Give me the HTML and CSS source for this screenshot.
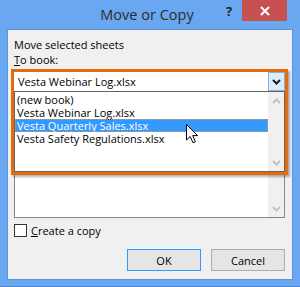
FILE: index.html
```html
<!DOCTYPE html>
<html lang="en">
<head>
  <meta charset="UTF-8" />
  <title>Move or Copy</title>
  <link rel="stylesheet" href="styles.css">
</head>
<body>
  <div class="window">
    <div class="titlebar">
      <div class="title">Move or Copy</div>
      <div class="help">?</div>
      <div class="close">
        <svg width="10" height="10" viewBox="0 0 10 10">
          <path d="M1 1 L9 9 M9 1 L1 9" stroke="#fff" stroke-width="2" />
        </svg>
      </div>
    </div>

    <div class="client">
      <p class="label">Move selected sheets</p>
      <p class="label"><u>T</u>o book:</p>

      <div class="book-select">
        <div class="combo">
          <span class="combo-text">Vesta Webinar Log.xlsx</span>
          <span class="combo-btn">
            <svg width="9" height="6" viewBox="0 0 9 6">
              <path d="M1 1 L4.5 4.5 L8 1" fill="none" stroke="#1e1e1e" stroke-width="2" />
            </svg>
          </span>
        </div>

        <div class="dropdown">
          <ul class="options">
            <li>(new book)</li>
            <li>Vesta Webinar Log.xlsx</li>
            <li class="selected">Vesta Quarterly Sales.xlsx</li>
            <li>Vesta Safety Regulations.xlsx</li>
          </ul>
          <div class="scrollbar">
            <svg width="9" height="6" viewBox="0 0 9 6">
              <path d="M1 5 L4.5 1.5 L8 5" fill="none" stroke="#c2c2c2" stroke-width="2" />
            </svg>
            <svg width="9" height="6" viewBox="0 0 9 6">
              <path d="M1 1 L4.5 4.5 L8 1" fill="none" stroke="#c2c2c2" stroke-width="2" />
            </svg>
          </div>
        </div>

        <svg class="cursor" width="13" height="20" viewBox="0 0 13 20">
          <path d="M0.5 0.5 L0.5 16 L4.2 12.5 L7 18.8 L9.4 17.8 L6.7 11.6 L11.6 11.6 Z" fill="#fff" stroke="#000" stroke-width="1" stroke-linejoin="miter" />
        </svg>
      </div>

      <div class="sheet-list">
        <div class="list-area"></div>
        <div class="scrollbar">
          <svg width="9" height="6" viewBox="0 0 9 6">
            <path d="M1 1 L4.5 4.5 L8 1" fill="none" stroke="#c2c2c2" stroke-width="2" />
          </svg>
        </div>
      </div>

      <div class="check">
        <span class="box"></span>
        <span><u>C</u>reate a copy</span>
      </div>

      <div class="buttons">
        <button class="btn default">OK</button>
        <button class="btn">Cancel</button>
      </div>
    </div>
  </div>
</body>
</html>
```

FILE: styles.css
```css
* {
  margin: 0;
  padding: 0;
  box-sizing: border-box;
}

body {
  font-family: 'Open Sans', 'Noto Sans', sans-serif;
  font-size: 11px;
  color: #000;
  background: #6aa7f1;
}

.window {
  width: 300px;
  height: 287px;
  background: #6aa7f1;
  padding: 0 8px 8px 8px;
  box-shadow: inset 0 -1px 0 #4f88d2;
  display: flex;
  flex-direction: column;
}

.titlebar {
  height: 30px;
  display: flex;
  align-items: flex-start;
  margin: 0 -1px 0 -8px;
}

.title {
  flex: 1;
  padding-left: 78px;
  text-align: center;
  line-height: 30px;
  font-size: 14.5px;
  color: #2b2b2b;
}

.help {
  width: 26px;
  height: 21px;
  line-height: 22px;
  text-align: center;
  font-size: 13px;
  font-weight: bold;
  color: #222;
}

.close {
  width: 45px;
  height: 21px;
  background: #c75050;
  display: flex;
  align-items: center;
  justify-content: center;
  margin-right: 6px;
}

.client {
  flex: 1;
  background: #f0f0f0;
  outline: 1px solid #5c93d8;
  padding: 7px 7px 0 6px;
  display: flex;
  flex-direction: column;
}

.label {
  line-height: 15px;
}

.book-select {
  position: relative;
  margin-top: 5px;
  z-index: 2;
}

.book-select::after {
  content: "";
  position: absolute;
  top: -3px;
  left: -3px;
  right: -3px;
  bottom: -84px;
  border: 3px solid #e46c0a;
  box-shadow: 2px 2px 2px rgba(0, 0, 0, 0.3);
  pointer-events: none;
}

.combo {
  height: 19px;
  background: #fff;
  display: flex;
  align-items: center;
  padding-left: 4px;
}

.combo-text {
  flex: 1;
}

.combo-btn {
  width: 17px;
  height: 19px;
  background: #dcecfc;
  border: 1px solid #7eb4ea;
  display: flex;
  align-items: center;
  justify-content: center;
}

.dropdown {
  position: absolute;
  top: 100%;
  left: 0;
  right: 0;
  height: 81px;
  background: #fff;
  border: 1px solid #646464;
  display: flex;
}

.options {
  flex: 1;
  list-style: none;
  padding-top: 1px;
}

.options li {
  height: 13px;
  line-height: 13px;
  padding-left: 2px;
}

.options .selected {
  background: #3399ff;
  color: #fff;
  outline: 1px dotted #d89a4c;
  outline-offset: -1px;
}

.scrollbar {
  width: 16px;
  background: #f0f0f0;
  display: flex;
  flex-direction: column;
  justify-content: space-between;
  align-items: center;
  padding: 6px 0 5px 0;
}

.cursor {
  position: absolute;
  left: 172px;
  top: 52px;
  z-index: 3;
}

.sheet-list {
  margin-top: 19px;
  height: 108px;
  background: #fff;
  border: 1px solid #828790;
  display: flex;
}

.list-area {
  flex: 1;
}

.sheet-list .scrollbar {
  justify-content: flex-end;
}

.check {
  margin-top: 6px;
  display: flex;
  align-items: center;
  line-height: 13px;
}

.box {
  width: 13px;
  height: 13px;
  background: #fff;
  border: 1px solid #333;
  margin-right: 4px;
}

.buttons {
  margin-top: 12px;
  display: flex;
  justify-content: flex-end;
  gap: 10px;
}

.btn {
  width: 74px;
  height: 22px;
  font-family: inherit;
  font-size: 11px;
  background: #e5e5e5;
  border: 1px solid #adadad;
  color: #000;
}

.btn.default {
  border-color: #3399ff;
}
```
